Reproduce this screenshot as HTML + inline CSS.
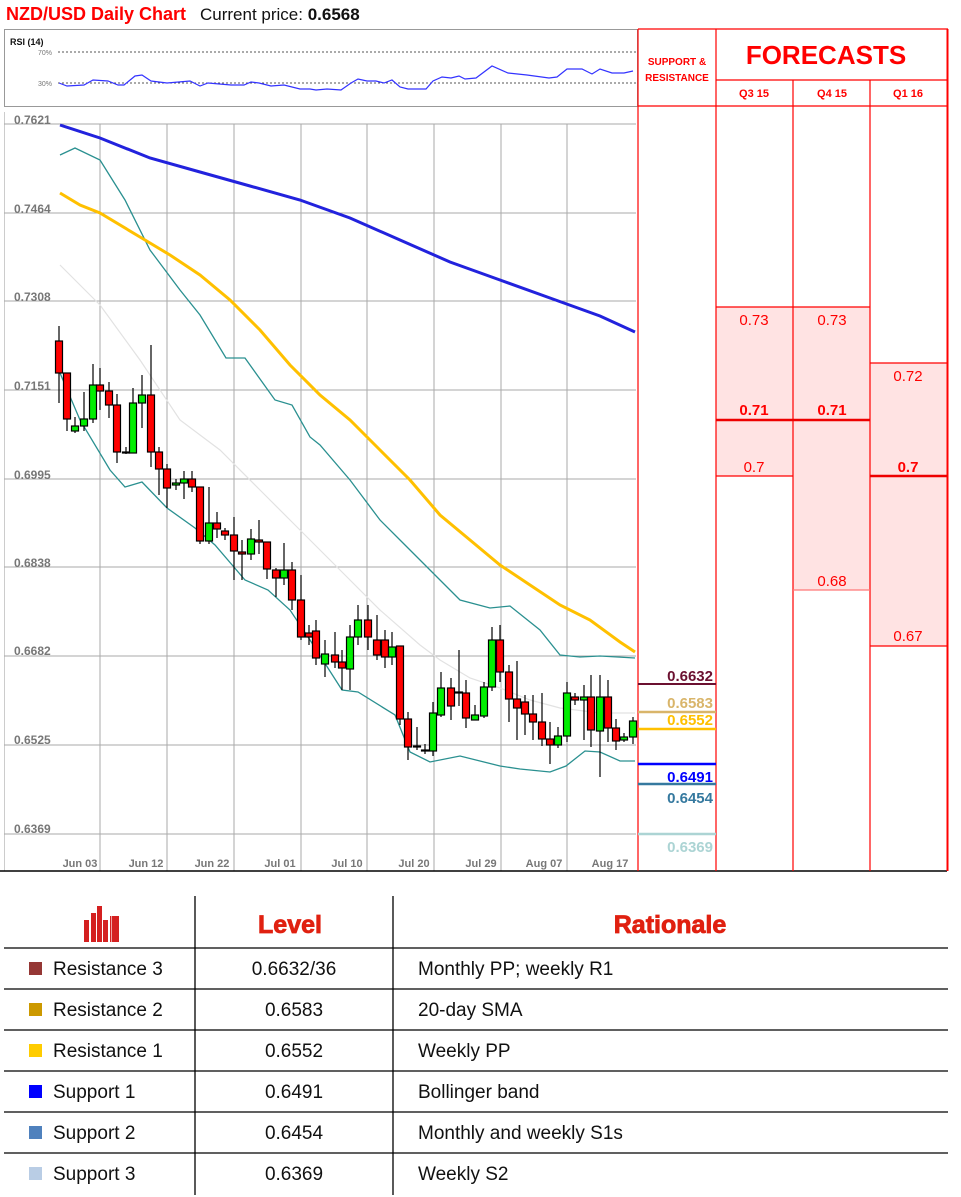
<!DOCTYPE html>
<html><head><meta charset="utf-8"><style>
html,body{margin:0;padding:0;background:#fff;width:961px;height:1197px;overflow:hidden}
svg{display:block}
text{font-family:"Liberation Sans",sans-serif}
</style></head><body>
<svg width="961" height="1197" viewBox="0 0 961 1197" xmlns="http://www.w3.org/2000/svg">
<text x="6" y="20" font-size="18" font-weight="bold" fill="#ff0000">NZD/USD Daily Chart</text>
<text x="200" y="20" font-size="17" fill="#111">Current price: <tspan font-weight="bold">0.6568</tspan></text>

<rect x="4.5" y="29.5" width="633" height="77" fill="#fff" stroke="#999"/>
<text x="10" y="45" font-size="9" font-weight="bold" fill="#111">RSI (14)</text>
<text x="38" y="55" font-size="7" fill="#777">70%</text>
<text x="38" y="86" font-size="7" fill="#777">30%</text>
<line x1="58" y1="52" x2="636" y2="52" stroke="#555" stroke-dasharray="2,2"/>
<line x1="58" y1="83" x2="636" y2="83" stroke="#555" stroke-dasharray="2,2"/>
<polyline fill="none" stroke="#3333ff" stroke-width="1.2" points="59,83 67,86 84,85 93,80 108,81 118,85 124,85 135,76 142,75 151,81 167,83 190,81 200,86 208,83 231,85 244,85 251,82 259,83 271,86 284,85 300,89 310,89 316,90 327,89 341,90 351,83 358,79 367,81 376,81 384,83 392,80 400,87 408,89 426,89 433,81 442,77 451,78 459,76 465,79 476,78 492,66 508,73 527,75 549,78 557,77 567,69 582,69 592,74 600,69 612,73 624,73 633,71"/>

<rect x="4.5" y="112" width="633" height="759" fill="#fff"/>
<line x1="4.5" y1="112" x2="4.5" y2="871" stroke="#ccc"/>
<g stroke="#aaa" stroke-width="1">
<line x1="100" y1="124" x2="100" y2="871"/><line x1="167" y1="124" x2="167" y2="871"/><line x1="234" y1="124" x2="234" y2="871"/><line x1="301" y1="124" x2="301" y2="871"/><line x1="367" y1="124" x2="367" y2="871"/><line x1="434" y1="124" x2="434" y2="871"/><line x1="501" y1="124" x2="501" y2="871"/><line x1="567" y1="124" x2="567" y2="871"/>
<line x1="4" y1="124" x2="636" y2="124"/><line x1="4" y1="213" x2="636" y2="213"/><line x1="4" y1="301" x2="636" y2="301"/><line x1="4" y1="390" x2="636" y2="390"/><line x1="4" y1="479" x2="636" y2="479"/><line x1="4" y1="567" x2="636" y2="567"/><line x1="4" y1="656" x2="636" y2="656"/><line x1="4" y1="745" x2="636" y2="745"/><line x1="4" y1="834" x2="636" y2="834"/>
</g>
<g font-size="12" font-weight="bold" fill="#777">
<text x="14" y="124">0.7621</text><text x="14" y="213">0.7464</text><text x="14" y="301">0.7308</text><text x="14" y="390">0.7151</text><text x="14" y="479">0.6995</text><text x="14" y="567">0.6838</text><text x="14" y="655">0.6682</text><text x="14" y="744">0.6525</text><text x="14" y="833">0.6369</text>
</g>
<g font-size="11" font-weight="bold" fill="#777" text-anchor="middle">
<text x="80" y="867">Jun 03</text><text x="146" y="867">Jun 12</text><text x="212" y="867">Jun 22</text><text x="280" y="867">Jul 01</text><text x="347" y="867">Jul 10</text><text x="414" y="867">Jul 20</text><text x="481" y="867">Jul 29</text><text x="544" y="867">Aug 07</text><text x="610" y="867">Aug 17</text>
</g>

<polyline fill="none" stroke="#e2e2e2" stroke-width="1.2" points="60,265 100,305 140,360 180,420 220,450 260,490 300,530 340,570 380,610 420,645 440,660 470,678 500,688 530,700 560,708 600,713 635,713"/>
<polyline fill="none" stroke="#2a9090" stroke-width="1.3" points="60,155 75,148 100,160 125,200 150,250 180,290 200,315 226,358 245,358 275,400 292,405 310,437 320,445 350,480 380,520 400,540 430,570 460,600 490,608 510,606 540,630 560,655 580,657 600,656 635,658"/>
<polyline fill="none" stroke="#2a9090" stroke-width="1.3" points="60,373 80,420 110,470 125,487 142,482 167,508 195,528 215,545 245,580 268,590 290,610 310,640 342,690 358,692 395,715 410,752 430,762 460,756 500,766 520,769 550,772 566,766 585,751 600,752 620,761 635,761"/>
<polyline fill="none" stroke="#ffc000" stroke-width="3" points="60,193 80,205 100,213 140,237 170,255 200,275 230,300 260,330 290,365 320,395 350,420 380,450 410,480 440,515 470,540 500,565 530,585 560,605 590,620 620,642 635,652"/>
<polyline fill="none" stroke="#2222dd" stroke-width="3" points="60,125 100,138 150,158 200,172 250,186 300,200 350,218 400,240 450,262 500,280 550,298 600,316 635,332"/>

<g stroke="#000" stroke-width="1.2">
<line x1="59" y1="326" x2="59" y2="403"/><rect x="55.5" y="341" width="7" height="32" fill="#f00"/>
<line x1="67" y1="373" x2="67" y2="431"/><rect x="63.5" y="373" width="7" height="46" fill="#f00"/>
<line x1="75" y1="417" x2="75" y2="433"/><rect x="71.5" y="426" width="7" height="5" fill="#0e0"/>
<line x1="84" y1="392" x2="84" y2="431"/><rect x="80.5" y="419" width="7" height="7" fill="#0e0"/>
<line x1="93" y1="364" x2="93" y2="423"/><rect x="89.5" y="385" width="7" height="34" fill="#0e0"/>
<line x1="100" y1="368" x2="100" y2="410"/><rect x="96.5" y="385" width="7" height="6" fill="#f00"/>
<line x1="109" y1="382" x2="109" y2="418"/><rect x="105.5" y="391" width="7" height="14" fill="#f00"/>
<line x1="117" y1="394" x2="117" y2="463"/><rect x="113.5" y="405" width="7" height="47" fill="#f00"/>
<line x1="126" y1="447" x2="126" y2="454"/><rect x="122.5" y="452" width="7" height="1" fill="#f00"/>
<line x1="133" y1="388" x2="133" y2="453"/><rect x="129.5" y="403" width="7" height="50" fill="#0e0"/>
<line x1="142" y1="375" x2="142" y2="428"/><rect x="138.5" y="395" width="7" height="8" fill="#0e0"/>
<line x1="151" y1="345" x2="151" y2="467"/><rect x="147.5" y="395" width="7" height="57" fill="#f00"/>
<line x1="159" y1="447" x2="159" y2="495"/><rect x="155.5" y="452" width="7" height="17" fill="#f00"/>
<line x1="167" y1="464" x2="167" y2="508"/><rect x="163.5" y="469" width="7" height="19" fill="#f00"/>
<line x1="176" y1="479" x2="176" y2="490"/><rect x="172.5" y="483" width="7" height="2" fill="#0e0"/>
<line x1="184" y1="471" x2="184" y2="499"/><rect x="180.5" y="479" width="7" height="4" fill="#0e0"/>
<line x1="192" y1="471" x2="192" y2="492"/><rect x="188.5" y="479" width="7" height="8" fill="#f00"/>
<line x1="200" y1="487" x2="200" y2="544"/><rect x="196.5" y="487" width="7" height="54" fill="#f00"/>
<line x1="209" y1="487" x2="209" y2="544"/><rect x="205.5" y="523" width="7" height="18" fill="#0e0"/>
<line x1="217" y1="512" x2="217" y2="538"/><rect x="213.5" y="523" width="7" height="6" fill="#f00"/>
<line x1="225" y1="528" x2="225" y2="540"/><rect x="221.5" y="531" width="7" height="4" fill="#f00"/>
<line x1="234" y1="517" x2="234" y2="580"/><rect x="230.5" y="535" width="7" height="16" fill="#f00"/>
<line x1="242" y1="540" x2="242" y2="580"/><rect x="238.5" y="552" width="7" height="2" fill="#f00"/>
<line x1="251" y1="529" x2="251" y2="560"/><rect x="247.5" y="539" width="7" height="15" fill="#0e0"/>
<line x1="259" y1="520" x2="259" y2="554"/><rect x="255.5" y="540" width="7" height="2" fill="#f00"/>
<line x1="267" y1="542" x2="267" y2="579"/><rect x="263.5" y="542" width="7" height="27" fill="#f00"/>
<line x1="276" y1="568" x2="276" y2="597"/><rect x="272.5" y="570" width="7" height="8" fill="#f00"/>
<line x1="284" y1="543" x2="284" y2="585"/><rect x="280.5" y="570" width="7" height="8" fill="#0e0"/>
<line x1="292" y1="562" x2="292" y2="610"/><rect x="288.5" y="570" width="7" height="30" fill="#f00"/>
<line x1="301" y1="575" x2="301" y2="640"/><rect x="297.5" y="600" width="7" height="37" fill="#f00"/>
<line x1="309" y1="625" x2="309" y2="645"/><rect x="305.5" y="633" width="7" height="4" fill="#f00"/>
<line x1="316" y1="620" x2="316" y2="665"/><rect x="312.5" y="631" width="7" height="27" fill="#f00"/>
<line x1="325" y1="640" x2="325" y2="677"/><rect x="321.5" y="654" width="7" height="10" fill="#0e0"/>
<line x1="335" y1="632" x2="335" y2="668"/><rect x="331.5" y="655" width="7" height="7" fill="#f00"/>
<line x1="342" y1="650" x2="342" y2="690"/><rect x="338.5" y="662" width="7" height="6" fill="#f00"/>
<line x1="350" y1="625" x2="350" y2="690"/><rect x="346.5" y="637" width="7" height="32" fill="#0e0"/>
<line x1="358" y1="605" x2="358" y2="645"/><rect x="354.5" y="620" width="7" height="17" fill="#0e0"/>
<line x1="368" y1="605" x2="368" y2="650"/><rect x="364.5" y="620" width="7" height="17" fill="#f00"/>
<line x1="377" y1="615" x2="377" y2="660"/><rect x="373.5" y="640" width="7" height="15" fill="#f00"/>
<line x1="385" y1="630" x2="385" y2="668"/><rect x="381.5" y="640" width="7" height="17" fill="#f00"/>
<line x1="392" y1="632" x2="392" y2="665"/><rect x="388.5" y="647" width="7" height="10" fill="#0e0"/>
<line x1="400" y1="646" x2="400" y2="725"/><rect x="396.5" y="646" width="7" height="73" fill="#f00"/>
<line x1="408" y1="712" x2="408" y2="760"/><rect x="404.5" y="719" width="7" height="28" fill="#f00"/>
<line x1="417" y1="727" x2="417" y2="750"/><rect x="413.5" y="746" width="7" height="1" fill="#f00"/>
<line x1="425" y1="744" x2="425" y2="754"/><rect x="421.5" y="750" width="7" height="1" fill="#f00"/>
<line x1="433" y1="702" x2="433" y2="756"/><rect x="429.5" y="713" width="7" height="38" fill="#0e0"/>
<line x1="441" y1="672" x2="441" y2="717"/><rect x="437.5" y="688" width="7" height="27" fill="#0e0"/>
<line x1="451" y1="678" x2="451" y2="720"/><rect x="447.5" y="688" width="7" height="18" fill="#f00"/>
<line x1="459" y1="650" x2="459" y2="706"/><rect x="455.5" y="692" width="7" height="1" fill="#f00"/>
<line x1="466" y1="680" x2="466" y2="728"/><rect x="462.5" y="693" width="7" height="25" fill="#f00"/>
<line x1="475" y1="705" x2="475" y2="720"/><rect x="471.5" y="715" width="7" height="5" fill="#0e0"/>
<line x1="484" y1="682" x2="484" y2="718"/><rect x="480.5" y="687" width="7" height="29" fill="#0e0"/>
<line x1="492" y1="627" x2="492" y2="691"/><rect x="488.5" y="640" width="7" height="47" fill="#0e0"/>
<line x1="500" y1="625" x2="500" y2="682"/><rect x="496.5" y="640" width="7" height="32" fill="#f00"/>
<line x1="509" y1="665" x2="509" y2="722"/><rect x="505.5" y="672" width="7" height="27" fill="#f00"/>
<line x1="517" y1="661" x2="517" y2="740"/><rect x="513.5" y="699" width="7" height="9" fill="#f00"/>
<line x1="525" y1="695" x2="525" y2="735"/><rect x="521.5" y="702" width="7" height="12" fill="#f00"/>
<line x1="533" y1="695" x2="533" y2="740"/><rect x="529.5" y="714" width="7" height="8" fill="#f00"/>
<line x1="542" y1="693" x2="542" y2="746"/><rect x="538.5" y="722" width="7" height="17" fill="#f00"/>
<line x1="550" y1="722" x2="550" y2="764"/><rect x="546.5" y="739" width="7" height="6" fill="#f00"/>
<line x1="558" y1="727" x2="558" y2="748"/><rect x="554.5" y="736" width="7" height="9" fill="#0e0"/>
<line x1="567" y1="682" x2="567" y2="742"/><rect x="563.5" y="693" width="7" height="43" fill="#0e0"/>
<line x1="575" y1="693" x2="575" y2="705"/><rect x="571.5" y="697" width="7" height="3" fill="#f00"/>
<line x1="584" y1="685" x2="584" y2="740"/><rect x="580.5" y="697" width="7" height="3" fill="#0e0"/>
<line x1="591" y1="675" x2="591" y2="747"/><rect x="587.5" y="697" width="7" height="33" fill="#f00"/>
<line x1="600" y1="675" x2="600" y2="777"/><rect x="596.5" y="697" width="7" height="34" fill="#0e0"/>
<line x1="608" y1="680" x2="608" y2="742"/><rect x="604.5" y="697" width="7" height="31" fill="#f00"/>
<line x1="616" y1="719" x2="616" y2="750"/><rect x="612.5" y="728" width="7" height="13" fill="#f00"/>
<line x1="624" y1="733" x2="624" y2="742"/><rect x="620.5" y="737" width="7" height="3" fill="#0e0"/>
<line x1="633" y1="717" x2="633" y2="744"/><rect x="629.5" y="721" width="7" height="16" fill="#0e0"/>
</g>
<line x1="0" y1="871" x2="947" y2="871" stroke="#000" stroke-width="1.5"/>

<rect x="716" y="307" width="77" height="169" fill="#ffe3e3"/>
<rect x="793" y="307" width="77" height="283" fill="#ffe3e3"/>
<rect x="870" y="363" width="77" height="283" fill="#ffe3e3"/>
<g stroke="#f00" stroke-width="1.2">
<line x1="638" y1="29" x2="638" y2="871"/>
<line x1="716" y1="29" x2="716" y2="871"/>
<line x1="793" y1="80" x2="793" y2="871"/>
<line x1="870" y1="80" x2="870" y2="871"/>
<line x1="638" y1="29" x2="948" y2="29"/>
<line x1="716" y1="80" x2="948" y2="80"/>
<line x1="638" y1="106" x2="948" y2="106"/>
<line x1="716" y1="307" x2="870" y2="307"/>
<line x1="716" y1="476" x2="793" y2="476"/>
<line x1="793" y1="590" x2="870" y2="590" stroke="#f77"/>
<line x1="870" y1="363" x2="947" y2="363"/>
<line x1="870" y1="646" x2="947" y2="646"/>
</g>
<line x1="947.5" y1="29" x2="947.5" y2="871" stroke="#f00" stroke-width="2"/>
<line x1="716" y1="420" x2="870" y2="420" stroke="#e00" stroke-width="2.5"/>
<line x1="870" y1="476" x2="947" y2="476" stroke="#e00" stroke-width="2.5"/>
<g fill="#f00" text-anchor="middle">
<text x="677" y="65" font-size="10" font-weight="bold">SUPPORT &amp;</text>
<text x="677" y="81" font-size="10" font-weight="bold">RESISTANCE</text>
<text x="826" y="64" font-size="26" font-weight="bold">FORECASTS</text>
<text x="754" y="97" font-size="11" font-weight="bold">Q3 15</text>
<text x="832" y="97" font-size="11" font-weight="bold">Q4 15</text>
<text x="908" y="97" font-size="11" font-weight="bold">Q1 16</text>
<text x="754" y="325" font-size="15">0.73</text>
<text x="832" y="325" font-size="15">0.73</text>
<text x="908" y="381" font-size="15">0.72</text>
<text x="754" y="415" font-size="15" font-weight="bold">0.71</text>
<text x="832" y="415" font-size="15" font-weight="bold">0.71</text>
<text x="754" y="472" font-size="15">0.7</text>
<text x="908" y="472" font-size="15" font-weight="bold">0.7</text>
<text x="832" y="586" font-size="15">0.68</text>
<text x="908" y="641" font-size="15">0.67</text>
</g>
<line x1="638" y1="684" x2="716" y2="684" stroke="#6b1030" stroke-width="2"/>
<line x1="638" y1="712" x2="716" y2="712" stroke="#d9b56a" stroke-width="2.5"/>
<line x1="638" y1="729" x2="716" y2="729" stroke="#ffc000" stroke-width="2.5"/>
<line x1="638" y1="764" x2="716" y2="764" stroke="#0000ff" stroke-width="2.5"/>
<line x1="638" y1="784" x2="716" y2="784" stroke="#35799f" stroke-width="2.5"/>
<line x1="638" y1="834" x2="716" y2="834" stroke="#acd4d4" stroke-width="2.5"/>
<g font-size="15" font-weight="bold" text-anchor="end">
<text x="713" y="681" fill="#6b1030">0.6632</text>
<text x="713" y="708" fill="#d9b56a">0.6583</text>
<text x="713" y="725" fill="#ffc000">0.6552</text>
<text x="713" y="782" fill="#0000ff">0.6491</text>
<text x="713" y="803" fill="#35799f">0.6454</text>
<text x="713" y="852" fill="#acd4d4">0.6369</text>
</g>

<g fill="#d42020">
<rect x="84" y="920" width="5" height="22"/><rect x="91" y="913" width="5" height="29"/><rect x="97" y="906" width="5" height="36"/><rect x="103" y="920" width="5" height="22"/><rect x="110" y="916" width="9" height="26"/>
</g>
<rect x="111" y="916" width="1" height="26" fill="#fff" opacity="0.6"/>
<text x="290" y="933" font-size="25" font-weight="900" fill="#e02010" text-anchor="middle" stroke="#e02010" stroke-width="0.8">Level</text>
<text x="670" y="933" font-size="25" font-weight="900" fill="#e02010" text-anchor="middle" stroke="#e02010" stroke-width="0.8">Rationale</text>
<g stroke="#000" stroke-width="1.3">
<line x1="195" y1="896" x2="195" y2="1195"/><line x1="393" y1="896" x2="393" y2="1195"/>
<line x1="4" y1="948" x2="948" y2="948"/><line x1="4" y1="989" x2="948" y2="989"/><line x1="4" y1="1030" x2="948" y2="1030"/><line x1="4" y1="1071" x2="948" y2="1071"/><line x1="4" y1="1112" x2="948" y2="1112"/><line x1="4" y1="1153" x2="948" y2="1153"/>
</g>
<rect x="29" y="962" width="13" height="13" fill="#953735"/>
<rect x="29" y="1003" width="13" height="13" fill="#cc9900"/>
<rect x="29" y="1044" width="13" height="13" fill="#ffcc00"/>
<rect x="29" y="1085" width="13" height="13" fill="#0000ff"/>
<rect x="29" y="1126" width="13" height="13" fill="#4f81bd"/>
<rect x="29" y="1167" width="13" height="13" fill="#b9cde5"/>
<g font-size="19" fill="#111">
<text x="53" y="975">Resistance 3</text><text x="53" y="1016">Resistance 2</text><text x="53" y="1057">Resistance 1</text><text x="53" y="1098">Support 1</text><text x="53" y="1139">Support 2</text><text x="53" y="1180">Support 3</text>
<g text-anchor="middle"><text x="294" y="975">0.6632/36</text><text x="294" y="1016">0.6583</text><text x="294" y="1057">0.6552</text><text x="294" y="1098">0.6491</text><text x="294" y="1139">0.6454</text><text x="294" y="1180">0.6369</text></g>
<text x="418" y="975">Monthly PP; weekly R1</text><text x="418" y="1016">20-day SMA</text><text x="418" y="1057">Weekly PP</text><text x="418" y="1098">Bollinger band</text><text x="418" y="1139">Monthly and weekly S1s</text><text x="418" y="1180">Weekly S2</text>
</g>
</svg>
</body></html>
